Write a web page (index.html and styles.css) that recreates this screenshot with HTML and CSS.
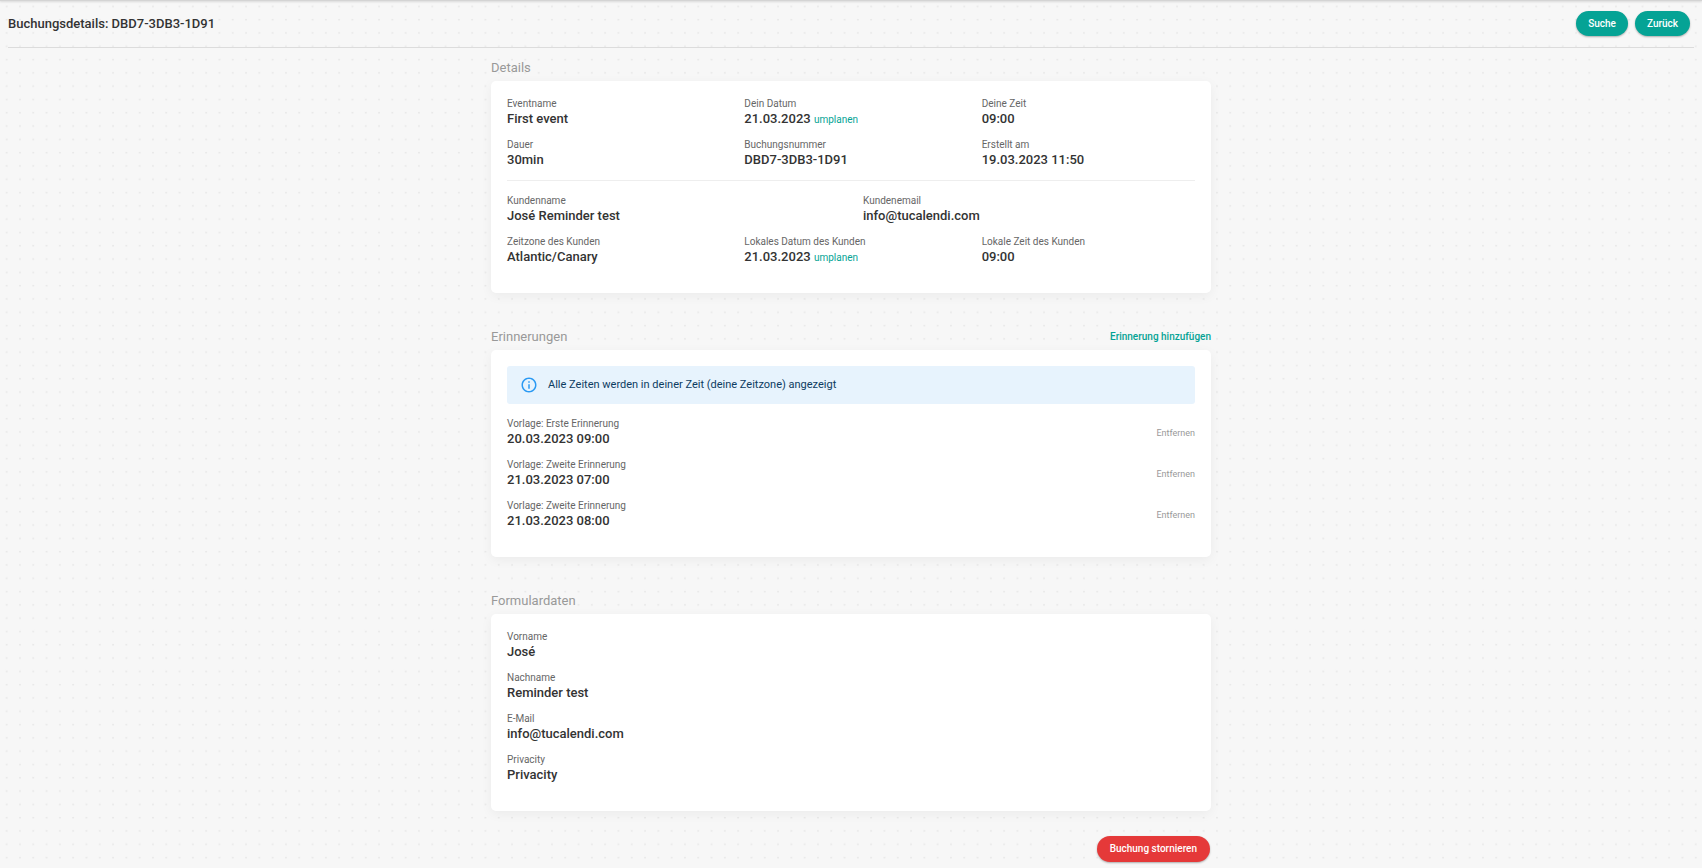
FILE: index.html
```html
<!DOCTYPE html>
<html lang="de">
<head>
<meta charset="utf-8">
<meta name="viewport" content="width=device-width, initial-scale=1">
<title>Buchungsdetails: DBD7-3DB3-1D91</title>
<link rel="stylesheet" href="styles.css">
</head>
<body>
<header class="page-header">
  <h1 class="page-title">Buchungsdetails: DBD7-3DB3-1D91</h1>
  <div class="header-actions">
    <button class="btn" type="button">Suche</button>
    <button class="btn" type="button">Zurück</button>
  </div>
</header>
<main class="content">
  <section class="section">
    <div class="section-head"><h2 class="section-title">Details</h2></div>
    <div class="card">
      <dl class="grid">
        <div class="field"><dt>Eventname</dt><dd>First event</dd></div>
        <div class="field"><dt>Dein Datum</dt><dd>21.03.2023 <a class="link" href="#">umplanen</a></dd></div>
        <div class="field"><dt>Deine Zeit</dt><dd>09:00</dd></div>
        <div class="field"><dt>Dauer</dt><dd>30min</dd></div>
        <div class="field"><dt>Buchungsnummer</dt><dd>DBD7-3DB3-1D91</dd></div>
        <div class="field"><dt>Erstellt am</dt><dd>19.03.2023 11:50</dd></div>
      </dl>
      <hr class="divider">
      <dl class="grid">
        <div class="field half">
          <dt>Kundenname</dt><dd>José Reminder test</dd>
        </div>
        <div class="field half">
          <dt>Kundenemail</dt><dd>info@tucalendi.com</dd>
        </div>
        <div class="field"><dt>Zeitzone des Kunden</dt><dd>Atlantic/Canary</dd></div>
        <div class="field"><dt>Lokales Datum des Kunden</dt><dd>21.03.2023 <a class="link" href="#">umplanen</a></dd></div>
        <div class="field"><dt>Lokale Zeit des Kunden</dt><dd>09:00</dd></div>
      </dl>
    </div>
  </section>

  <section class="section">
    <div class="section-head">
      <h2 class="section-title">Erinnerungen</h2>
      <a class="link link-strong" href="#">Erinnerung hinzufügen</a>
    </div>
    <div class="card">
      <div class="alert">
        <svg class="alert-icon" viewBox="0 0 24 24" aria-hidden="true"><path d="M11 7h2v2h-2zM11 11h2v6h-2zM12 2C6.48 2 2 6.48 2 12s4.48 10 10 10 10-4.48 10-10S17.52 2 12 2zm0 18c-4.41 0-8-3.590-8-8s3.590-8 8-8 8 3.590 8 8-3.590 8-8 8z"/></svg>
        <span>Alle Zeiten werden in deiner Zeit (deine Zeitzone) angezeigt</span>
      </div>
      <ul class="list">
        <li class="reminder"><div class="field"><div class="label">Vorlage: Erste Erinnerung</div><div class="value">20.03.2023 09:00</div></div><button class="remove" type="button">Entfernen</button></li>
        <li class="reminder"><div class="field"><div class="label">Vorlage: Zweite Erinnerung</div><div class="value">21.03.2023 07:00</div></div><button class="remove" type="button">Entfernen</button></li>
        <li class="reminder"><div class="field"><div class="label">Vorlage: Zweite Erinnerung</div><div class="value">21.03.2023 08:00</div></div><button class="remove" type="button">Entfernen</button></li>
      </ul>
    </div>
  </section>

  <section class="section">
    <div class="section-head"><h2 class="section-title">Formulardaten</h2></div>
    <div class="card">
      <dl class="list">
        <div class="field"><dt>Vorname</dt><dd>José</dd></div>
        <div class="field"><dt>Nachname</dt><dd>Reminder test</dd></div>
        <div class="field"><dt>E-Mail</dt><dd>info@tucalendi.com</dd></div>
        <div class="field"><dt>Privacity</dt><dd>Privacity</dd></div>
      </dl>
    </div>
    <div class="footer-actions">
      <button class="btn btn-danger" type="button">Buchung stornieren</button>
    </div>
  </section>
</main>
</body>
</html>
```
FILE: styles.css
```css
* { box-sizing: border-box; }

body {
  margin: 0;
  color: #333;
  font-family: Roboto, "Liberation Sans", sans-serif;
  font-size: 13px;
  line-height: 18px;
  background-color: #f7f7f7;
  /* Ten by ten dots per tile */
  background-image: url("data:image/svg+xml,%3Csvg xmlns='http://www.w3.org/2000/svg' width='133' height='133'%3E%3Cpattern id='d' width='13.3' height='13.3' patternUnits='userSpaceOnUse'%3E%3Ccircle cx='6.650' cy='6.300' r='0.900' fill='%23e6e6e6'/%3E%3C/pattern%3E%3Crect width='133' height='133' fill='url(%23d)'/%3E%3C/svg%3E");
}

h1, h2, dl, dd, ul { margin: 0; padding: 0; }

.page-header {
  display: flex;
  align-items: center;
  justify-content: space-between;
  margin: 0 8px;
  padding: 11px 4px 11px 0;
  border-bottom: 1px solid #dcdcdc;
}

body::before {
  content: "";
  position: absolute;
  inset: 0 0 auto;
  height: 1px;
  background: #d4d4d4;
  box-shadow: 0 1px 2px #ccc;
}

.page-title { font-size: 13px; font-weight: 500; }

.header-actions { display: flex; gap: 7px; }

.btn {
  height: 25px;
  padding: 0 12px;
  border: 0;
  border-radius: 13px;
  color: #fff;
  background: #05a395;
  font-family: inherit;
  font-size: 10px;
  font-weight: 500;
  line-height: 16px;
  box-shadow: 0 1px 2px rgba(0, 0, 0, .3);
  cursor: pointer;
}

.btn-danger { height: 26px; padding: 0 13px; background: #e53939; }

.content {
  display: flex;
  flex-direction: column;
  gap: 35px;
  max-width: 720px;
  margin: 0 auto;
  padding: 11px 0 6px;
}

.section-head {
  display: flex;
  align-items: center;
  justify-content: space-between;
  margin-bottom: 4px;
}

.section-title { color: #999; font-size: 13px; font-weight: 400; }

.card {
  padding: 16px 16px 27px;
  border-radius: 5px;
  background: #fff;
  box-shadow: 0 3px 12px rgba(0, 0, 0, .05);
}

.grid {
  display: grid;
  grid-template-columns: repeat(6, 1fr);
  gap: 10px 24px;
}

.field { grid-column: span 2; }
.half { grid-column: span 3; }

dt, .label { color: #666; font-size: 10px; line-height: 13px; }
dd, .value { height: 18px; font-weight: 500; }

.link {
  color: #05a395;
  font-size: 10px;
  font-weight: 400;
  text-decoration: none;
}

.link-strong { font-weight: 500; }

.divider {
  margin: 11px 0 13px;
  border: 0;
  border-top: 1px solid #eee;
}

.alert {
  display: flex;
  align-items: center;
  gap: 10px;
  margin-bottom: 13px;
  padding: 10px 13px;
  border-radius: 3px;
  color: #0d3c61;
  background: #e7f3fd;
  font-size: 11px;
}

.alert-icon { width: 18px; height: 18px; fill: #2b9af3; }

.list {
  display: flex;
  flex-direction: column;
  gap: 10px;
  list-style: none;
}

.reminder {
  display: flex;
  align-items: center;
  justify-content: space-between;
}

.remove {
  padding: 0;
  border: 0;
  color: #999;
  background: none;
  font-family: inherit;
  font-size: 9px;
  line-height: 12px;
  cursor: pointer;
}

.footer-actions {
  display: flex;
  justify-content: flex-end;
  padding: 25px 1px 0;
}
```
